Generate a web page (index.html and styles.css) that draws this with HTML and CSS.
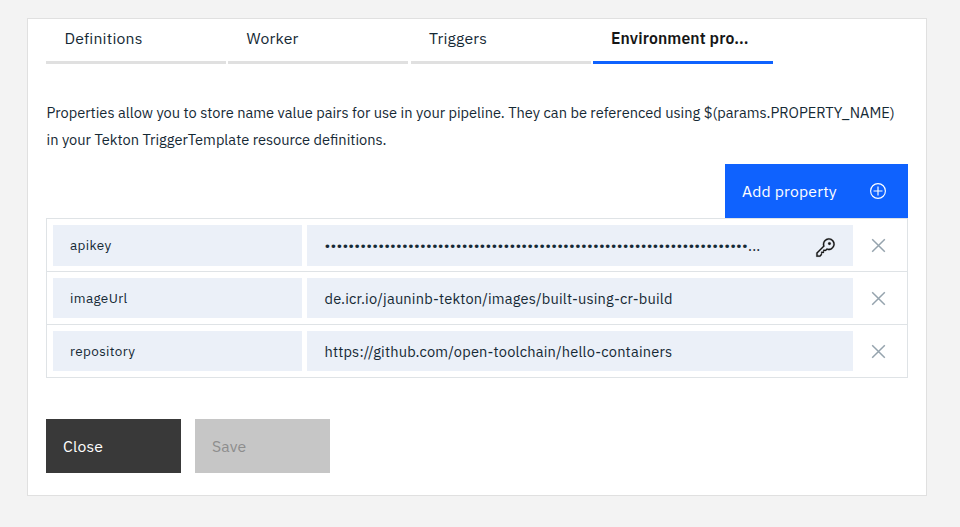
FILE: index.html
```html
<!DOCTYPE html>
<html lang="en">
<head>
<meta charset="utf-8">
<title>Environment properties</title>
<link rel="stylesheet" href="styles.css">
</head>
<body>
<main class="panel">
  <nav class="tabs">
    <a class="tab">Definitions</a>
    <a class="tab">Worker</a>
    <a class="tab tab-third">Triggers</a>
    <a class="tab active">Environment pro...</a>
  </nav>
  <p class="intro">Properties allow you to store name value pairs for use in your pipeline. They can be referenced using $(params.PROPERTY_NAME)<br>in your Tekton TriggerTemplate resource definitions.</p>
  <button class="add"><span>Add property</span>
    <svg width="18" height="18" viewBox="0 0 18 18" fill="none" stroke="currentColor" stroke-width="1.15"><circle cx="9" cy="9" r="7.4"/><path d="M9 4.5v9M4.500 9h9"/></svg>
  </button>
  <section class="table">
    <div class="row">
      <div class="name">apikey</div>
      <div class="value"><span>•••••••••••••••••••••••••••••••••••••••••••••••••••••••••••••••••••••••</span><span>...</span>
        <svg class="key" width="21" height="21" viewBox="0 0 32 32" fill="currentColor" stroke="currentColor" stroke-width=".4"><path d="M21 2a9 9 0 0 0-9 9 8.900 8.900 0 0 0 .39 2.610L2 24v6h6l2.500-2.500v-3.090h3.090v-3.090h3.090l1.710-1.710A9 9 0 1 0 21 2Zm0 16a7 7 0 0 1-2.030-.3l-1.160-.35-.86.86-.89 1.110H12.500v3.090H9.400v3.180L7.170 28H4v-3.170L13.790 15l.86-.86-.35-1.160A7 7 0 1 1 21 18Z"/><circle cx="22" cy="10" r="2"/></svg>
      </div>
      <svg class="close" width="15" height="15" viewBox="0 0 15 15"><path d="M1.200 1.200l12.600 12.600M13.800 1.200L1.200 13.800"/></svg>
    </div>
    <div class="row">
      <div class="name">imageUrl</div>
      <div class="value">de.icr.io/jauninb-tekton/images/built-using-cr-build</div>
      <svg class="close" width="15" height="15" viewBox="0 0 15 15"><path d="M1.200 1.200l12.600 12.600M13.800 1.200L1.200 13.800"/></svg>
    </div>
    <div class="row">
      <div class="name">repository</div>
      <div class="value">https://github.com/open-toolchain/hello-containers</div>
      <svg class="close" width="15" height="15" viewBox="0 0 15 15"><path d="M1.200 1.200l12.600 12.600M13.800 1.200L1.200 13.800"/></svg>
    </div>
  </section>
  <footer class="actions">
    <button class="btn dark">Close</button>
    <button class="btn disabled" disabled>Save</button>
  </footer>
</main>
</body>
</html>
```
FILE: styles.css
```css
* { box-sizing: border-box; }
body { margin: 0; padding: 18px 33px 31px 27px; height: 527px; background: #f3f3f3; color: #152935; font-family: "IBM Plex Sans", Roboto, sans-serif; font-size: 15.75px; letter-spacing: .18px; overflow: hidden; }
button { font: inherit; letter-spacing: inherit; border: 0; border-radius: 0; }
svg { display: block; flex: none; }
.panel { width: 900px; height: 478px; background: #fff; border: 1px solid #e0e0e0; padding: 0 18px; display: flex; flex-direction: column; }
.tabs { display: flex; gap: 2px; height: 45px; }
.tab { width: 180px; height: 45px; border-bottom: 3px solid #e0e0e0; padding: 7px 18px 0 18.500px; line-height: 25px; white-space: nowrap; }
.tab-third { margin-left: 1px; padding-left: 18px; }
.tab.active { border-bottom-color: #0f62fe; color: #161616; font-weight: 600; letter-spacing: .13px; padding-left: 18px; }
.intro { margin: 35px 0 0 .5px; font-size: 14.625px; letter-spacing: 0; line-height: 27px; white-space: nowrap; }
.add { align-self: flex-end; width: 183px; height: 54px; margin-top: 11px; padding: 0 21px 0 17px; background: #0f62fe; color: #fff; display: flex; align-items: center; justify-content: space-between; }
.table { height: 160px; border: 1px solid #dfe3e6; }
.row { height: 53px; padding: 6px; display: flex; align-items: flex-start; border-bottom: 1px solid #dfe3e6; }
.row:last-child { border-bottom: 0; }
.name, .value { height: 40px; background: #ebf0f8; padding-left: 17px; display: flex; align-items: center; white-space: nowrap; }
.row:first-child > .name, .row:first-child > .value { height: 41px; }
.name { width: 249px; font-size: 13.500px; letter-spacing: .36px; }
.row:first-child > .name { padding-bottom: 2px; }
.value { width: 546px; margin-left: 5px; padding-left: 17.500px; font-size: 14.625px; }
.key { margin: 4px 17px 0 auto; color: #161616; }
.close { margin: 13px 0 0 18px; fill: none; stroke: #95a3ad; stroke-width: 1.500; }
.actions { display: flex; gap: 14px; margin-top: 41px; }
.btn { width: 135px; height: 54px; padding: 0 17px; text-align: left; }
.dark { background: #393939; color: #fff; }
.disabled { background: #c6c6c6; color: #8d8d8d; }
```
